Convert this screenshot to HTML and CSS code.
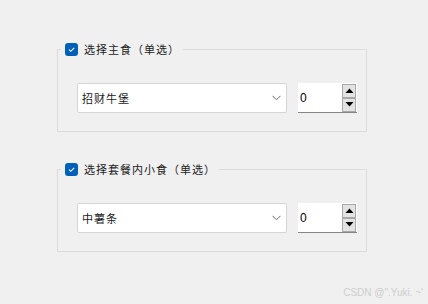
FILE: index.html
```html
<html>
<head>
  <meta charset="utf-8">
  <link rel="stylesheet" href="styles.css">
</head>
<body>
<div class="page">
  <fieldset class="group">
    <legend><span class="check"><svg width="9" height="7" viewBox="0 0 9 7"><path d="M2 3.7 L3.8 5.3 L7.2 1.8" fill="none" stroke="#fff" stroke-width="1.1"/></svg></span>选择主食（单选）</legend>
    <div class="row">
      <div class="combo"><span>招财牛堡</span><svg class="chev" width="9" height="6" viewBox="0 0 9 6"><path d="M0.5 0.8 L4.5 4.8 L8.5 0.8" fill="none" stroke="#6a6a6a" stroke-width="1"/></svg></div>
      <div class="spin"><span>0</span>
        <div class="btns">
          <div class="btn"><svg width="9" height="5" viewBox="0 0 9 5"><path d="M0.5 5 L4.5 0.5 L8.5 5Z" fill="#000"/></svg></div>
          <div class="btn"><svg width="9" height="5" viewBox="0 0 9 5"><path d="M0.5 0 L4.5 4.5 L8.5 0Z" fill="#000"/></svg></div>
        </div>
      </div>
    </div>
  </fieldset>
  <fieldset class="group">
    <legend><span class="check"><svg width="9" height="7" viewBox="0 0 9 7"><path d="M2 3.7 L3.8 5.3 L7.2 1.8" fill="none" stroke="#fff" stroke-width="1.1"/></svg></span>选择套餐内小食（单选）</legend>
    <div class="row">
      <div class="combo"><span>中薯条</span><svg class="chev" width="9" height="6" viewBox="0 0 9 6"><path d="M0.5 0.8 L4.5 4.8 L8.5 0.8" fill="none" stroke="#6a6a6a" stroke-width="1"/></svg></div>
      <div class="spin"><span>0</span>
        <div class="btns">
          <div class="btn"><svg width="9" height="5" viewBox="0 0 9 5"><path d="M0.5 5 L4.5 0.5 L8.5 5Z" fill="#000"/></svg></div>
          <div class="btn"><svg width="9" height="5" viewBox="0 0 9 5"><path d="M0.5 0 L4.5 4.5 L8.5 0Z" fill="#000"/></svg></div>
        </div>
      </div>
    </div>
  </fieldset>
</div>
<div class="mark">CSDN @".Yuki. ~'</div>
</body>
</html>
```
FILE: styles.css
```css
body {margin:0;background-color:#f0f0f0;font-family:"Noto Sans CJK SC","Liberation Sans",sans-serif;font-size:11px;color:#000;}
.page {display:flex;flex-direction:column;gap:29px;padding:41px 0 0 57px;}
.group {width:310px;box-sizing:border-box;margin:0;border:1px solid #dcdcdc;padding:0 9px 18px 19px;}
.group legend {display:flex;align-items:center;height:16px;padding:0 3px 0 4px;margin-left:-16px;line-height:16px;letter-spacing:1px;color:#1a1a1a;}
.check {display:flex;align-items:center;justify-content:center;width:13px;height:13px;border-radius:3px;background-color:#005fb8;margin-right:6px;}
.row {display:flex;margin-top:26px;}
.combo {display:flex;align-items:center;justify-content:space-between;width:210px;height:30px;box-sizing:border-box;background-color:#fff;border:1px solid #d5d5d5;border-radius:2px;padding:0 5px 0 4px;letter-spacing:1px;color:#1a1a1a;}
.spin {display:flex;align-items:center;justify-content:space-between;margin-left:11px;width:59px;height:30px;box-sizing:border-box;background-color:#fff;border-bottom:1px solid #868686;padding:1px 1px 1px 2px;font-family:"Liberation Sans",sans-serif;font-size:12px;}
.btns {display:flex;flex-direction:column;gap:0;}
.btn {display:flex;align-items:center;justify-content:center;width:14px;height:14px;box-sizing:border-box;background-color:#e3e3e3;border:1px solid #a8a8a8;}
.mark {position:absolute;right:5px;bottom:6px;font-family:"Liberation Sans",sans-serif;font-size:10px;color:#cdcdcd;}
```
